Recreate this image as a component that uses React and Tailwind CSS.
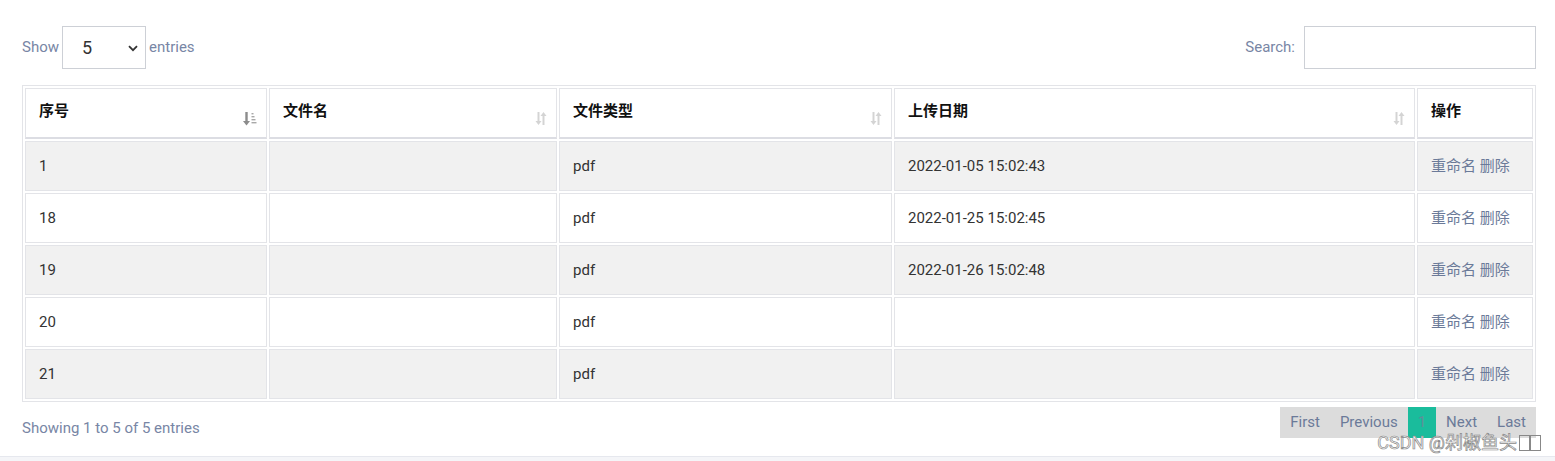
import { useState } from "react";

const rows = [
  { id: "1", name: "", type: "pdf", date: "2022-01-05 15:02:43" },
  { id: "18", name: "", type: "pdf", date: "2022-01-25 15:02:45" },
  { id: "19", name: "", type: "pdf", date: "2022-01-26 15:02:48" },
  { id: "20", name: "", type: "pdf", date: "" },
  { id: "21", name: "", type: "pdf", date: "" },
];

function SortBoth() {
  return (
    <svg width="12" height="15" viewBox="0 0 12 15" className="absolute right-[9px] bottom-[11px]">
      <g stroke="#d4d4d4" strokeWidth="2" fill="none">
        <path d="M3.5 1v11" />
        <path d="M8.5 3v11" />
      </g>
      <path d="M0.5 10h6l-3 4z" fill="#d4d4d4" />
      <path d="M5.5 5h6l-3 -4z" fill="#d4d4d4" />
    </svg>
  );
}

function SortAsc() {
  return (
    <svg width="14" height="15" viewBox="0 0 14 15" className="absolute right-[9px] bottom-[11px]">
      <path d="M3.5 1v11" stroke="#8c8c8c" strokeWidth="2.4" fill="none" />
      <path d="M0 10h7l-3.5 4.5z" fill="#8c8c8c" />
      <g fill="#a8a8a8">
        <rect x="8.5" y="2" width="2" height="1.4" />
        <rect x="8.5" y="5" width="3" height="1.4" />
        <rect x="8.5" y="8" width="4" height="1.4" />
        <rect x="8.5" y="11" width="5" height="1.4" />
      </g>
    </svg>
  );
}

export default function App() {
  const [len, setLen] = useState("5");

  const cols = [
    { label: "序号", w: "w-[242px]", icon: <SortAsc /> },
    { label: "文件名", w: "w-[288px]", icon: <SortBoth /> },
    { label: "文件类型", w: "w-[333px]", icon: <SortBoth /> },
    { label: "上传日期", w: "w-[521px]", icon: <SortBoth /> },
    { label: "操作", w: "w-[116px]", icon: null },
  ];

  return (
    <div className="h-[461px] bg-[#f4f5f8] font-['Roboto','Noto_Sans_CJK_SC',sans-serif]">
      <div className="relative h-[457px] bg-white border-b border-[#e6e8ee] px-[22px] pt-[26px]">

        {/* Top controls */}
        <div className="flex items-center justify-between w-[1514px]">
          <div className="flex items-center gap-[3px] text-[15px] text-[#7886a5]">
            <span>Show</span>
            <div className="relative">
              <select
                value={len}
                onChange={(e) => setLen(e.target.value)}
                className="appearance-none w-[84px] h-[43px] border border-[#cdd0d6] bg-white pl-[19px] text-[18px] text-[#333] outline-none"
              >
                <option value="5">5</option>
                <option value="10">10</option>
                <option value="25">25</option>
              </select>
              <svg width="10" height="7" viewBox="0 0 10 7" className="absolute right-[8px] top-[19px] pointer-events-none">
                <path d="M1 1.2l4 4 4-4" stroke="#333" strokeWidth="1.8" fill="none" />
              </svg>
            </div>
            <span>entries</span>
          </div>
          <div className="flex items-center gap-[9px] text-[15px] text-[#7886a5]">
            <span>Search:</span>
            <input className="w-[232px] h-[43px] border border-[#cdd0d6] outline-none px-2" />
          </div>
        </div>

        {/* Table */}
        <table className="mt-[16px] w-[1514px] table-fixed border-separate border-spacing-[2px] border border-[#e3e4e8] text-[15px]">
          <thead>
            <tr>
              {cols.map((c) => (
                <th
                  key={c.label}
                  className={`${c.w} relative h-[51px] border border-[#e3e4e8] border-b-2 border-b-[#dcdde3] px-[13px] pb-[4px] text-left font-bold text-[#111] bg-white`}
                >
                  {c.label}
                  {c.icon}
                </th>
              ))}
            </tr>
          </thead>
          <tbody>
            {rows.map((r, i) => {
              const bg = i % 2 === 0 ? "bg-[#f1f1f1]" : "bg-white";
              const cell = `h-[50px] border border-[#e3e4e8] px-[13px] text-[#333] ${bg}`;
              return (
                <tr key={r.id}>
                  <td className={cell}>{r.id}</td>
                  <td className={cell}>{r.name}</td>
                  <td className={cell}>{r.type}</td>
                  <td className={cell}>{r.date}</td>
                  <td className={`${cell} !text-[#6b7a99]`}>
                    <a href="#">重命名</a> <a href="#">删除</a>
                  </td>
                </tr>
              );
            })}
          </tbody>
        </table>

        {/* Footer */}
        <div className="mt-[5px] flex items-start justify-between w-[1514px]">
          <div className="pt-[10px] text-[15px] text-[#7886a5]">Showing 1 to 5 of 5 entries</div>
          <div className="flex h-[31px] bg-[#dcdcdc] text-[15px] text-[#6b7a99]">
            <a href="#" className="flex items-center px-[10px]">First</a>
            <a href="#" className="flex items-center px-[10px]">Previous</a>
            <a href="#" className="flex items-center px-[10px] bg-[#1abc9c] text-[#5f8f99]">1</a>
            <a href="#" className="flex items-center px-[10px]">Next</a>
            <a href="#" className="flex items-center px-[10px]">Last</a>
          </div>
        </div>

        {/* Watermark */}
        <div className="absolute right-[14px] bottom-[2px] flex items-center text-[18px] leading-[22px] text-[#f6f6f6] [-webkit-text-stroke:0.7px_#8a8a8a]">
          <span>CSDN @剁椒鱼头</span>
          <span className="ml-[2px] inline-block w-[11px] h-[16px] border border-[#888]" />
          <span className="inline-block w-[11px] h-[16px] border border-[#888]" />
        </div>
      </div>
    </div>
  );
}
